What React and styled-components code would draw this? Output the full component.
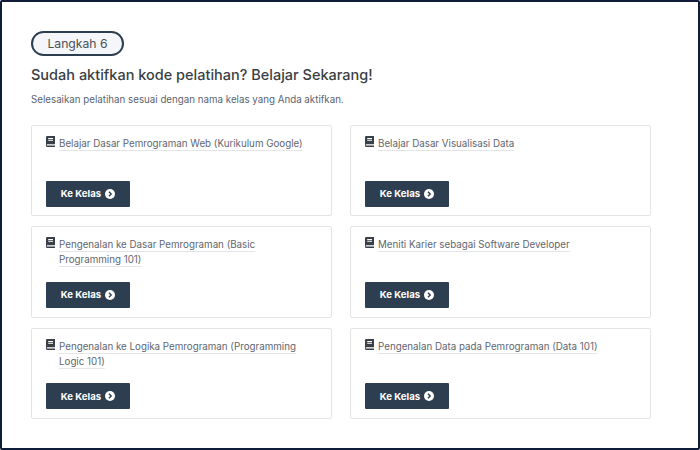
import React from "react";
import styled, { createGlobalStyle } from "styled-components";

const GlobalStyle = createGlobalStyle`
  html, body {
    margin: 0;
    padding: 0;
    background: #fff;
    font-family: Inter, "Liberation Sans", sans-serif;
  }
`;

const Frame = styled.div`
  box-sizing: border-box;
  width: 700px;
  height: 450px;
  overflow: hidden;
  background: #fff;
  border: 2px solid #0f1c3a;
  border-radius: 2px;
  padding: 29px 47px 0 29px;
`;

const StepBadge = styled.div`
  box-sizing: border-box;
  width: 93px;
  height: 25px;
  display: flex;
  align-items: center;
  justify-content: center;
  background: #f4f6f9;
  border: 2px solid #2d3e50;
  border-radius: 13px;
  font-size: 12.2px;
  color: #4a5058;
`;

const Title = styled.h1`
  margin: 7px 0 0;
  font-size: 14.5px;
  line-height: 24px;
  font-weight: 500;
  color: #3a3f45;
`;

const Subtitle = styled.p`
  margin: 5px 0 0;
  font-size: 9.75px;
  line-height: 16px;
  color: #5b6470;
`;

const Grid = styled.div`
  display: grid;
  grid-template-columns: 301px 301px;
  grid-auto-rows: 91.4px;
  column-gap: 18px;
  row-gap: 10px;
  margin-top: 16.8px;
`;

const Card = styled.div`
  box-sizing: border-box;
  display: flex;
  flex-direction: column;
  justify-content: space-between;
  padding: 9px 14px 8.6px 14px;
  border: 1px solid #e2e4e6;
  border-radius: 2px;
`;

const CardHead = styled.div`
  display: flex;
  align-items: flex-start;
  gap: 4px;
`;

const BookIcon = styled.svg`
  flex: none;
  width: 9px;
  height: 11px;
  margin-top: 1px;
  color: #3a4048;
`;

const CourseName = styled.span`
  font-size: 9.77px;
  line-height: 15px;
  margin-top: 1px;
  color: #5f666f;
  text-decoration: underline;
  text-decoration-color: #e3e5e8;
  text-decoration-thickness: 1px;
  text-underline-offset: 3px;
`;

const GoButton = styled.button`
  box-sizing: border-box;
  width: 84px;
  height: 26px;
  display: flex;
  align-items: center;
  justify-content: center;
  gap: 4px;
  padding: 0;
  background: #2d3e50;
  border: none;
  border-radius: 1px;
  font-family: inherit;
  font-size: 9.6px;
  font-weight: 700;
  color: #fff;
`;

const ArrowIcon = styled.svg`
  width: 10px;
  height: 10px;
`;

const courses = [
  "Belajar Dasar Pemrograman Web (Kurikulum Google)",
  "Belajar Dasar Visualisasi Data",
  "Pengenalan ke Dasar Pemrograman (Basic Programming 101)",
  "Meniti Karier sebagai Software Developer",
  "Pengenalan ke Logika Pemrograman (Programming Logic 101)",
  "Pengenalan Data pada Pemrograman (Data 101)",
];

const App = () => {
  return (
    <Frame>
      <GlobalStyle />
      <StepBadge>Langkah 6</StepBadge>
      <Title>Sudah aktifkan kode pelatihan? Belajar Sekarang!</Title>
      <Subtitle>Selesaikan pelatihan sesuai dengan nama kelas yang Anda aktifkan.</Subtitle>
      <Grid>
        {courses.map((name) => (
          <Card key={name}>
            <CardHead>
              <BookIcon viewBox="0 0 9 11">
                <path
                  fill="currentColor"
                  fillRule="evenodd"
                  d="M1.2 0H9v8.2H1.4a.7.7 0 0 0 0 1.4H9V11H1.2A1.2 1.2 0 0 1 0 9.8V1.2A1.2 1.2 0 0 1 1.2 0ZM2.2 2v.9h4.8V2ZM2.2 3.8v.9h4.8v-.9Z"
                />
              </BookIcon>
              <CourseName>{name}</CourseName>
            </CardHead>
            <GoButton>
              Ke Kelas
              <ArrowIcon viewBox="0 0 10 10">
                <circle cx="5" cy="5" r="5" fill="#fff" />
                <path d="M4 2.7 6.2 5 4 7.3" fill="none" stroke="#2d3e50" strokeWidth="1.4" />
              </ArrowIcon>
            </GoButton>
          </Card>
        ))}
      </Grid>
    </Frame>
  );
};

export default App;
